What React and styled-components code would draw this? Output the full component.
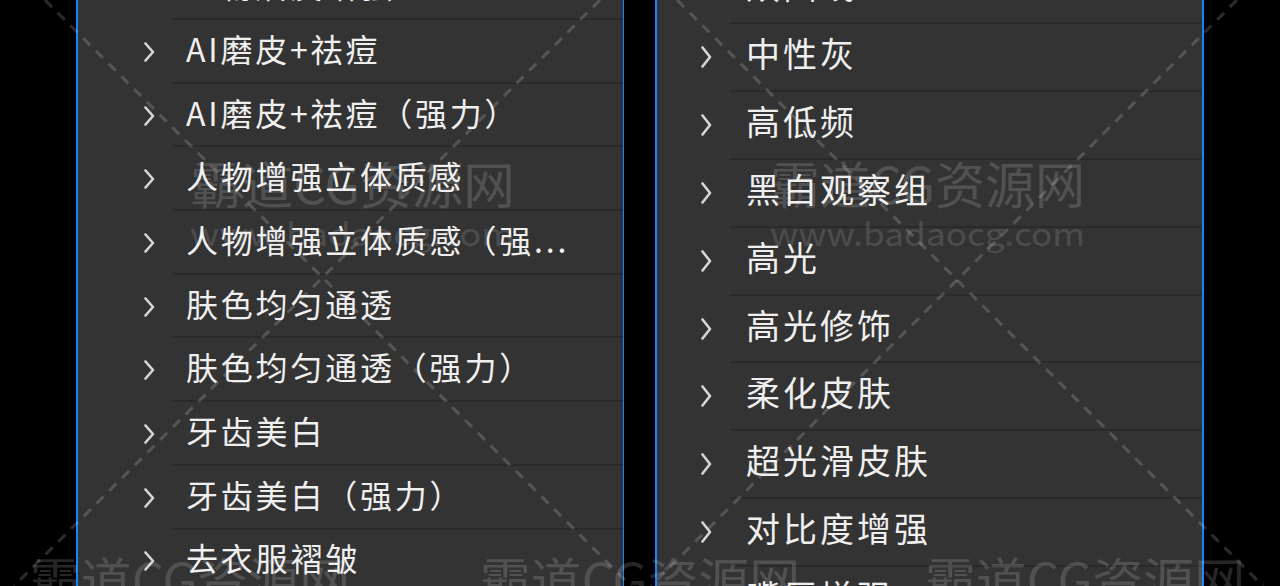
import React from "react";
import styled, { createGlobalStyle } from "styled-components";

const GlobalStyle = createGlobalStyle`
  html, body {
    margin: 0;
    padding: 0;
    background: #000;
  }
  #root {
    height: 586px;
  }
`;

const Page = styled.div`
  position: relative;
  display: flex;
  align-items: stretch;
  gap: 31px;
  height: 586px;
  padding-left: 76px;
  overflow: hidden;
  background: #000;
  font-family: "Noto Sans CJK SC", "Noto Sans", sans-serif;
`;

const Panel = styled.div`
  box-sizing: border-box;
  width: ${(p) => p.$width}px;
  height: 100%;
  background: #333333;
  border-left: 2px solid #1684ff;
  border-right: ${(p) => p.$right}px solid #1684ff;
  overflow: hidden;
`;

const List = styled.ul`
  list-style: none;
  margin: ${(p) => p.$offset}px 0 0 0;
  padding: 0;
`;

const Item = styled.li`
  display: grid;
  grid-template-rows: 1fr 2px;
  height: ${(p) => p.$h}px;
`;

const Line = styled.div`
  display: flex;
  align-items: center;
  padding-left: ${(p) => p.$indent}px;
  padding-right: 70px;
  padding-bottom: ${(p) => p.$lift}px;
  min-width: 0;
`;

const Chevron = styled.svg`
  flex: none;
  margin-top: 8px;
  margin-right: ${(p) => p.$gap}px;
`;

const Label = styled.span`
  flex: 1;
  color: #efefef;
  font-size: ${(p) => p.$size}px;
  letter-spacing: ${(p) => p.$spacing}px;
  line-height: 1;
  white-space: nowrap;
`;

const Shortcut = styled.span`
  color: #dcdcdc;
  font-family: "Noto Sans", sans-serif;
  font-size: 30px;
  letter-spacing: 1px;
  line-height: 1;
  white-space: nowrap;
`;

const Rule = styled.div`
  margin-left: ${(p) => p.$inset}px;
  background: #2a2a2a;
`;

const Overlay = styled.svg`
  position: absolute;
  left: 0;
  top: 0;
  pointer-events: none;
`;

const MarkText = styled.text`
  fill: rgba(255, 255, 255, 0.15);
  font-family: "Noto Sans CJK SC", "Noto Sans", sans-serif;
`;

const leftItems = [
  { label: "人物磨皮增强" },
  { label: "AI磨皮+祛痘" },
  { label: "AI磨皮+祛痘（强力）" },
  { label: "人物增强立体质感" },
  { label: "人物增强立体质感（强..." },
  { label: "肤色均匀通透" },
  { label: "肤色均匀通透（强力）" },
  { label: "牙齿美白" },
  { label: "牙齿美白（强力）" },
  { label: "去衣服褶皱" },
];

const rightItems = [
  { label: "双曲线", key: "Shift+Ctrl+F2" },
  { label: "中性灰" },
  { label: "高低频" },
  { label: "黑白观察组" },
  { label: "高光" },
  { label: "高光修饰" },
  { label: "柔化皮肤" },
  { label: "超光滑皮肤" },
  { label: "对比度增强" },
  { label: "嘴唇增强" },
];

function Arrow({ h, gap }) {
  return (
    <Chevron width="12" height={h} viewBox={`0 0 12 ${h}`} $gap={gap}>
      <polyline
        points={`2.5,1.5 10,${h / 2} 2.5,${h - 1.5}`}
        fill="none"
        stroke="#d6d6d6"
        strokeWidth="2.6"
        strokeLinecap="round"
        strokeLinejoin="round"
      />
    </Chevron>
  );
}

function ActionList({ items, cfg }) {
  return (
    <List $offset={cfg.offset}>
      {items.map((it, i) => (
        <Item key={i} $h={cfg.rowH}>
          <Line $indent={cfg.indent} $lift={cfg.lift}>
            <Arrow h={cfg.arrowH} gap={cfg.gap} />
            <Label $size={cfg.size} $spacing={cfg.spacing}>
              {it.label}
            </Label>
            {it.key && <Shortcut>{it.key}</Shortcut>}
          </Line>
          <Rule $inset={cfg.ruleInset} />
        </Item>
      ))}
    </List>
  );
}

const leftCfg = {
  offset: -43.7,
  rowH: 63.7,
  indent: 65,
  gap: 31,
  arrowH: 20,
  size: 32,
  spacing: 2.8,
  lift: 6,
  ruleInset: 95,
};

const rightCfg = {
  offset: -43.9,
  rowH: 67.9,
  indent: 43,
  gap: 34,
  arrowH: 22,
  size: 34,
  spacing: 3,
  lift: 8,
  ruleInset: 73,
};

function Watermark() {
  const dash = {
    stroke: "rgba(255,255,255,0.17)",
    strokeWidth: 3,
    strokeDasharray: "10 8",
  };
  const brand = [
    { x: 190, y: 204, w: 325 },
    { x: 770, y: 204, w: 315 },
    { x: 30, y: 600, w: 320 },
    { x: 480, y: 600, w: 320 },
    { x: 925, y: 600, w: 320 },
  ];
  const sites = [
    { x: 190, y: 246, w: 325 },
    { x: 770, y: 246, w: 315 },
  ];
  return (
    <Overlay width="1280" height="586" viewBox="0 0 1280 586">
      <line x1="45" y1="0" x2="631" y2="586" {...dash} />
      <line x1="600" y1="0" x2="14" y2="586" {...dash} />
      <line x1="677" y1="0" x2="1263" y2="586" {...dash} />
      <line x1="1237" y1="0" x2="651" y2="586" {...dash} />
      {brand.map((b, i) => (
        <MarkText
          key={"b" + i}
          x={b.x}
          y={b.y}
          fontSize="50"
          textLength={b.w}
          lengthAdjust="spacingAndGlyphs"
        >
          霸道CG资源网
        </MarkText>
      ))}
      {sites.map((s, i) => (
        <MarkText
          key={"s" + i}
          x={s.x}
          y={s.y}
          fontSize="32"
          textLength={s.w}
          lengthAdjust="spacingAndGlyphs"
        >
          www.badaocg.com
        </MarkText>
      ))}
    </Overlay>
  );
}

export default function App() {
  return (
    <>
      <GlobalStyle />
      <Page>
        <Panel $width={548} $right={1}>
          <ActionList items={leftItems} cfg={leftCfg} />
        </Panel>
        <Panel $width={549} $right={2}>
          <ActionList items={rightItems} cfg={rightCfg} />
        </Panel>
        <Watermark />
      </Page>
    </>
  );
}
